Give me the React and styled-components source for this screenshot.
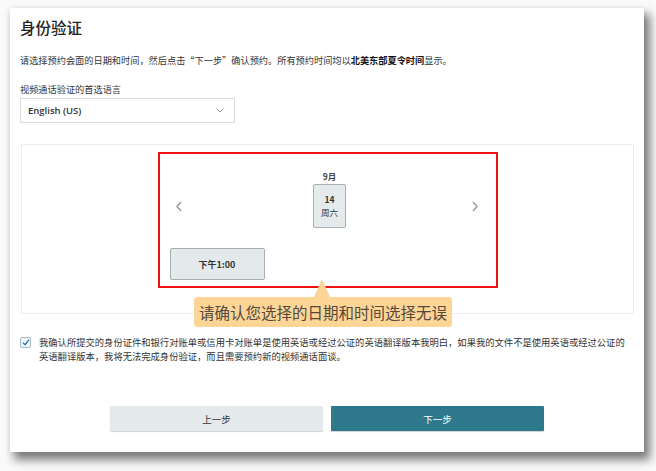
import React from 'react';
import styled, { createGlobalStyle } from 'styled-components';

const Global = createGlobalStyle`
  html, body { margin: 0; padding: 0; background: #fafafa; }
  body {
    font-family: "Noto Sans CJK SC", "Noto Sans", sans-serif;
    color: #333;
    width: 656px;
    height: 471px;
    overflow: hidden;
  }
`;

const Card = styled.div`
  box-sizing: border-box;
  width: 634px;
  height: 444px;
  margin: 8px 0 0 10px;
  background: #fff;
  box-shadow: 5px 7px 9px 1px rgba(0, 0, 0, 0.5), 0 0 5px rgba(0, 0, 0, 0.08);
  padding: 9px 0 0 0;
  display: flex;
  flex-direction: column;
`;

const Title = styled.h1`
  margin: 0 0 0 10px;
  font-size: 15.5px;
  line-height: 20px;
  font-weight: 500;
  color: #222;
`;

const Intro = styled.p`
  margin: 16px 0 0 10px;
  font-size: 9.2px;
  line-height: 14px;
  color: #333;
  b { font-weight: 700; color: #111; }
`;

const Label = styled.div`
  margin: 15px 0 0 10px;
  font-size: 9.2px;
  line-height: 14px;
  color: #333;
`;

const Select = styled.div`
  box-sizing: border-box;
  margin: 2px 0 0 10px;
  width: 215px;
  height: 25px;
  border: 1px solid #dcdcdc;
  display: flex;
  align-items: center;
  justify-content: space-between;
  padding: 0 10px 0 7px;
  font-family: "Open Sans", "Noto Sans", sans-serif;
  font-size: 9.5px;
  font-weight: 600;
  color: #333;
`;

const Panel = styled.div`
  position: relative;
  box-sizing: border-box;
  margin: 21px 0 0 11px;
  width: 613px;
  height: 170px;
  border: 1px solid #ededed;
  padding-top: 7px;
  display: flex;
  justify-content: center;
  align-items: flex-start;
`;

const Highlight = styled.div`
  box-sizing: border-box;
  width: 340px;
  height: 136px;
  border: 2px solid #f01010;
  display: flex;
  flex-direction: column;
  padding: 0 10px;
`;

const DateRow = styled.div`
  display: flex;
  align-items: center;
  justify-content: space-between;
  margin-top: 16px;
  padding: 0 7px 0 5px;
`;

const DateColumn = styled.div`
  display: flex;
  flex-direction: column;
  align-items: center;
  gap: 2px;
  margin-left: 6px;
`;

const Month = styled.div`
  font-size: 8.5px;
  line-height: 12px;
  font-weight: 700;
  color: #444;
`;

const DayBox = styled.div`
  box-sizing: border-box;
  width: 33px;
  height: 44px;
  background: #e5ebed;
  border: 1px solid #a9b0b3;
  border-radius: 2px;
  display: flex;
  flex-direction: column;
  align-items: center;
  justify-content: center;
  font-size: 8.5px;
  line-height: 13px;
  color: #333;
  span:first-child { font-weight: 700; }
`;

const Chevron = styled.svg`
  width: 8px;
  height: 11px;
  margin-top: 14px;
`;

const TimeButton = styled.div`
  box-sizing: border-box;
  margin-top: 20px;
  width: 95px;
  height: 32px;
  background: #e4eaec;
  border: 1px solid #a8afb2;
  border-radius: 2px;
  display: flex;
  align-items: center;
  justify-content: center;
  font-size: 9px;
  font-weight: 700;
  color: #333;
`;

const Tip = styled.div`
  position: absolute;
  left: 172px;
  top: 152px;
  width: 258px;
  height: 30px;
  background: #fdd596;
  border-radius: 3px;
  display: flex;
  align-items: center;
  justify-content: center;
  font-size: 15.5px;
  color: #55493d;
  &::before {
    content: "";
    position: absolute;
    left: 120px;
    top: -18px;
    border-left: 8px solid transparent;
    border-right: 8px solid transparent;
    border-bottom: 18px solid #fdd596;
  }
`;

const ConsentRow = styled.label`
  display: flex;
  align-items: flex-start;
  gap: 8px;
  margin: 21px 0 0 10px;
  padding-right: 14px;
`;

const Check = styled.span`
  box-sizing: border-box;
  flex: none;
  width: 11px;
  height: 11px;
  margin-top: 2px;
  border: 1px solid #a5b8c4;
  border-radius: 2px;
  display: flex;
  align-items: center;
  justify-content: center;
  background: #f7fafc;
`;

const ConsentText = styled.span`
  font-size: 9.3px;
  line-height: 14px;
  color: #333;
`;

const Actions = styled.div`
  display: flex;
  justify-content: center;
  gap: 8px;
  margin-top: 43px;
`;

const Button = styled.button`
  width: 213px;
  height: 25px;
  border: 0;
  border-radius: 1px;
  font-family: "Noto Sans CJK SC", sans-serif;
  font-size: 9.5px;
  background: ${p => (p.$primary ? '#2e7a8c' : '#e4eaec')};
  color: ${p => (p.$primary ? '#fff' : '#333')};
  box-shadow: 0 1px 1px rgba(0, 0, 0, 0.18);
`;

export default function App() {
  return (
    <>
      <Global />
      <Card>
        <Title>身份验证</Title>
        <Intro>
          请选择预约会面的日期和时间，然后点击“下一步”确认预约。所有预约时间均以<b>北美东部夏令时间</b>显示。
        </Intro>
        <Label>视频通话验证的首选语言</Label>
        <Select>
          <span>English (US)</span>
          <svg width="8" height="5" viewBox="0 0 8 5">
            <path d="M0.5 0.5 L4 4 L7.5 0.5" fill="none" stroke="#999" strokeWidth="1" />
          </svg>
        </Select>
        <Panel>
          <Highlight>
            <DateRow>
              <Chevron viewBox="0 0 8 11">
                <path d="M6 1 L2 5.5 L6 10" fill="none" stroke="#a0a0a0" strokeWidth="1.6" />
              </Chevron>
              <DateColumn>
                <Month>9月</Month>
                <DayBox>
                  <span>14</span>
                  <span>周六</span>
                </DayBox>
              </DateColumn>
              <Chevron viewBox="0 0 8 11">
                <path d="M2 1 L6 5.5 L2 10" fill="none" stroke="#a0a0a0" strokeWidth="1.6" />
              </Chevron>
            </DateRow>
            <TimeButton>下午1:00</TimeButton>
          </Highlight>
          <Tip>请确认您选择的日期和时间选择无误</Tip>
        </Panel>
        <ConsentRow>
          <Check>
            <svg width="8" height="7" viewBox="0 0 8 7">
              <path d="M1 3.8 L3 5.8 L7 0.8" fill="none" stroke="#2b7cc0" strokeWidth="1.4" />
            </svg>
          </Check>
          <ConsentText>
            我确认所提交的身份证件和银行对账单或信用卡对账单是使用英语或经过公证的英语翻译版本我明白，如果我的文件不是使用英语或经过公证的英语翻译版本，我将无法完成身份验证，而且需要预约新的视频通话面谈。
          </ConsentText>
        </ConsentRow>
        <Actions>
          <Button>上一步</Button>
          <Button $primary>下一步</Button>
        </Actions>
      </Card>
    </>
  );
}
